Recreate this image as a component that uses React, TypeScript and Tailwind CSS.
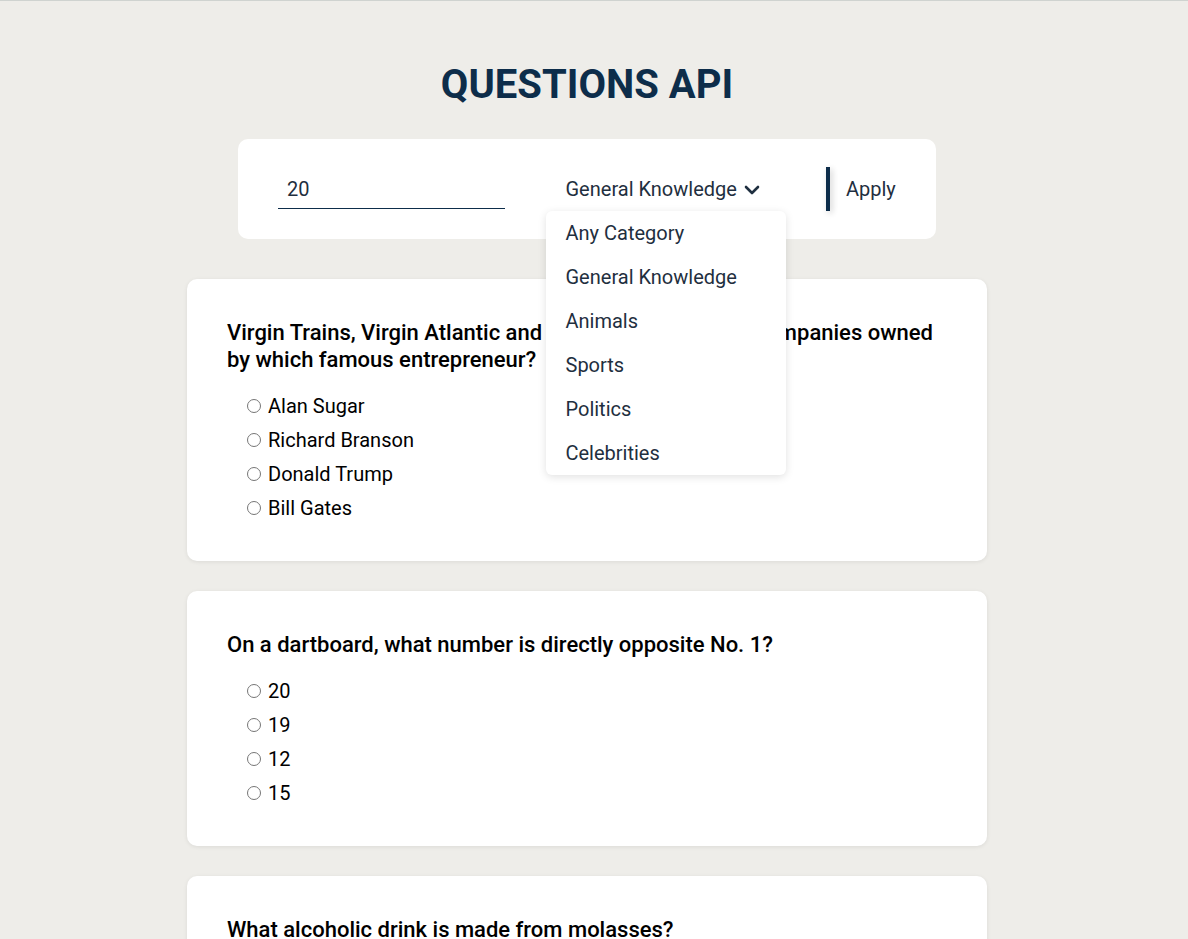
import { useState } from "react";

const categories = ["Any Category", "General Knowledge", "Animals", "Sports", "Politics", "Celebrities"];

const questions = [
    {
        text: "Virgin Trains, Virgin Atlantic and Virgin Racing, are all companies owned by which famous entrepreneur?",
        answers: ["Alan Sugar", "Richard Branson", "Donald Trump", "Bill Gates"]
    },
    {
        text: "On a dartboard, what number is directly opposite No. 1?",
        answers: ["20", "19", "12", "15"]
    },
    {
        text: "What alcoholic drink is made from molasses?",
        answers: ["Rum", "Gin", "Vodka", "Whisky"]
    }
];

function Chevron() {
    return <svg width="16" height="10" viewBox="0 0 16 10" fill="none" stroke="currentColor" strokeWidth="2.6" strokeLinecap="round" strokeLinejoin="round" className="mt-[1px]">
        <path d="M2 2l6 6 6-6" />
    </svg>
}

export default function App() {
    const [amount, setAmount] = useState("20");
    const [category, setCategory] = useState("General Knowledge");

    return <div className="min-h-screen border-t border-[#cfd3d0] bg-[#eeede9] pr-[14px] pt-[60px] pb-10 font-['Roboto',sans-serif]">
        <h1 className="text-center text-[40px] font-bold leading-[48px] text-[#0d2d4a]">QUESTIONS API</h1>

        <div className="mx-auto mt-[30px] flex w-[698px] items-center justify-between rounded-[10px] bg-white px-10 py-[28px]">
            <input
                value={amount}
                onChange={(e) => setAmount(e.target.value)}
                className="h-10 w-[227px] border-b border-[#0d2d4a] px-[9px] text-[20px] text-[#1f2f40] outline-none"
            />
            <div className="relative w-[240px]">
                <button className="flex h-11 items-center gap-[7px] px-5 text-[20px] text-[#1f2f40]">
                    {category}
                    <Chevron />
                </button>
                <ul className="absolute left-0 top-11 z-10 w-[240px] rounded-md bg-white shadow-[0_2px_8px_rgba(0,0,0,0.12)]">
                    {categories.map((c) => <li key={c} onClick={() => setCategory(c)} className="flex h-11 items-center px-5 text-[20px] text-[#1f2f40]">{c}</li>)}
                </ul>
            </div>
            <button className="flex h-11 w-[70px] items-center">
                <span className="h-11 w-1 bg-[#0d2d4a] shadow-[2px_2px_6px_rgba(0,0,0,0.2)]" />
                <span className="pl-4 text-[20px] text-[#1f2f40]">Apply</span>
            </button>
        </div>

        <div className="mx-auto mt-10 flex w-[800px] flex-col gap-[30px]">
            {questions.map((q, i) => <div key={i} className="rounded-[10px] bg-white px-10 pb-9 pt-10 shadow-[0_1px_4px_rgba(0,0,0,0.08)]">
                <h3 className="text-[22px] font-medium leading-[27px] text-black">{q.text}</h3>
                <div className="mt-4 flex flex-col pl-5">
                    {q.answers.map((a) => <label key={a} className="flex h-[34px] items-center text-[20px] text-black">
                        <input type="radio" name={`q${i}`} className="mr-[7px] h-[14px] w-[14px]" />
                        {a}
                    </label>)}
                </div>
            </div>)}
        </div>
    </div>
}
